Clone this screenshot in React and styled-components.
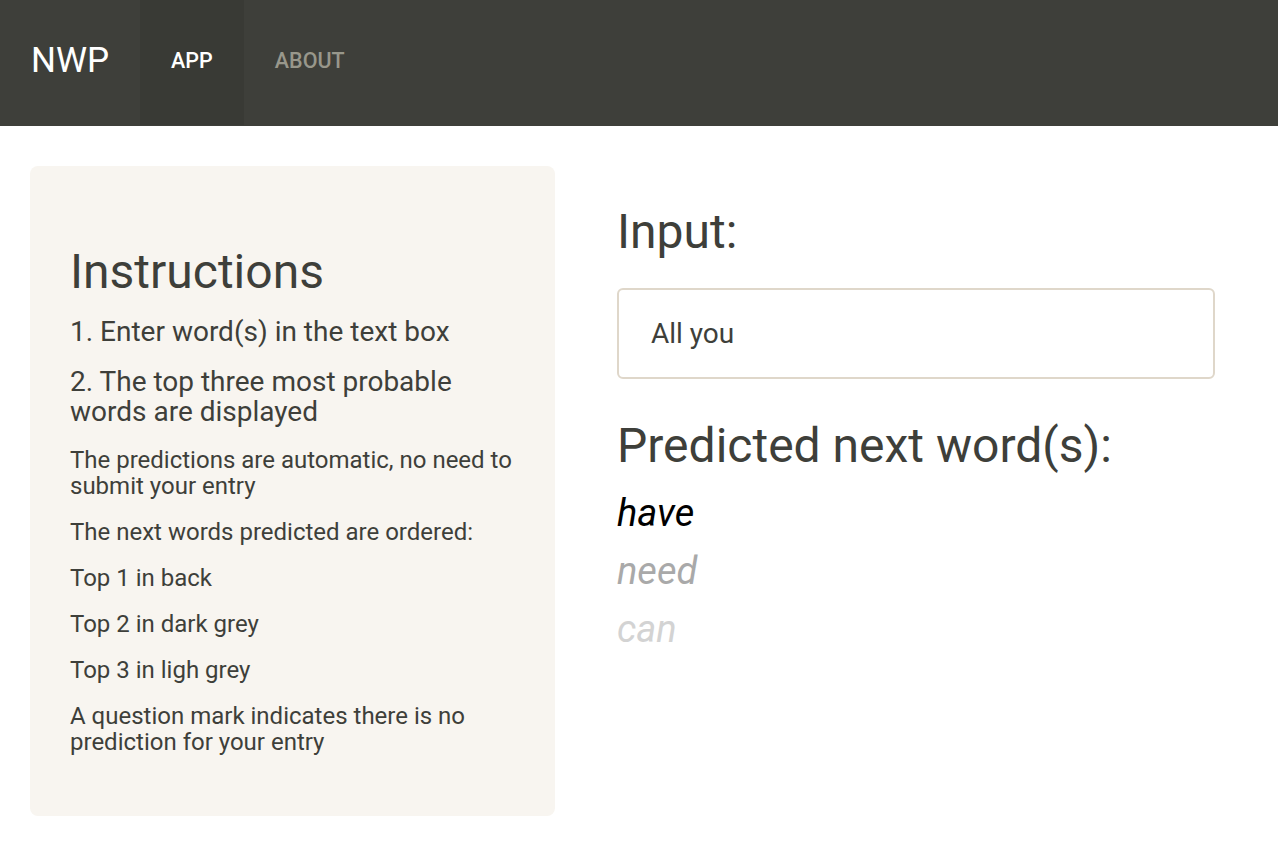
import React from 'react';
import styled, { createGlobalStyle } from 'styled-components';

const GlobalStyle = createGlobalStyle`
  html, body {
    margin: 0;
    padding: 0;
    background: #ffffff;
    font-family: Roboto, "Helvetica Neue", Arial, sans-serif;
    color: #3e3f3a;
  }
  * {
    box-sizing: border-box;
  }
`;

const Navbar = styled.nav`
  height: 126px;
  background: #3e3f3a;
  display: flex;
  align-items: flex-start;
  padding-left: 31px;
`;

const Brand = styled.div`
  display: flex;
  align-items: center;
  height: 125px;
  padding-bottom: 5px;
  font-size: 35px;
  color: #ffffff;
  margin-right: 31px;
`;

const NavLink = styled.a`
  display: flex;
  align-items: center;
  height: 125px;
  padding: 0 31px 5px;
  font-size: 21.5px;
  font-weight: 500;
  text-transform: uppercase;
  text-decoration: none;
  color: ${p => (p.active ? '#ffffff' : '#98978b')};
  background: ${p => (p.active ? '#393a35' : 'transparent')};
`;

const Main = styled.main`
  display: grid;
  grid-template-columns: 525px 1fr;
  gap: 62px;
  padding: 40px 63px 0 30px;
`;

const Well = styled.section`
  background: #f8f5f0;
  border-radius: 8px;
  padding: 80px 40px 54px;
  height: 650px;
`;

const Heading = styled.h3`
  font-size: 48px;
  font-weight: 400;
  line-height: 1.1;
  margin: 0 0 18px;
`;

const Step = styled.p`
  font-size: 28px;
  line-height: 30px;
  margin: 0 0 20px;
`;

const Note = styled.p`
  font-size: 24px;
  line-height: 26px;
  margin: 0 0 20px;
`;

const Output = styled.section`
  padding-top: 40px;
`;

const Label = styled.h3`
  font-size: 48px;
  font-weight: 400;
  line-height: 1.1;
  margin: 0 0 ${p => p.gap || 29}px;
`;

const TextInput = styled.input`
  display: block;
  width: 100%;
  height: 91px;
  border: 2px solid #dfd7ca;
  border-radius: 6px;
  padding: 0 32px;
  font-family: Roboto, Arial, sans-serif;
  font-size: 28px;
  color: #3e3f3a;
  background: #ffffff;
  outline: none;
  margin-bottom: 41px;
`;

const Prediction = styled.div`
  font-size: 38px;
  font-style: italic;
  line-height: 58px;
  color: ${p => p.tone};
`;

const predictions = [
  { word: 'have', tone: '#000000' },
  { word: 'need', tone: '#a9a9a9' },
  { word: 'can', tone: '#d3d3d3' },
];

export default function App() {
  return (
    <>
      <GlobalStyle />
      <Navbar>
        <Brand>NWP</Brand>
        <NavLink active>App</NavLink>
        <NavLink>About</NavLink>
      </Navbar>
      <Main>
        <Well>
          <Heading>Instructions</Heading>
          <Step>1. Enter word(s) in the text box</Step>
          <Step>2. The top three most probable words are displayed</Step>
          <Note>The predictions are automatic, no need to submit your entry</Note>
          <Note>The next words predicted are ordered:</Note>
          <Note>Top 1 in back</Note>
          <Note>Top 2 in dark grey</Note>
          <Note>Top 3 in ligh grey</Note>
          <Note>A question mark indicates there is no prediction for your entry</Note>
        </Well>
        <Output>
          <Label>Input:</Label>
          <TextInput defaultValue="All you" />
          <Label gap={11}>Predicted next word(s):</Label>
          {predictions.map(p => (
            <Prediction key={p.word} tone={p.tone}>{p.word}</Prediction>
          ))}
        </Output>
      </Main>
    </>
  );
}
